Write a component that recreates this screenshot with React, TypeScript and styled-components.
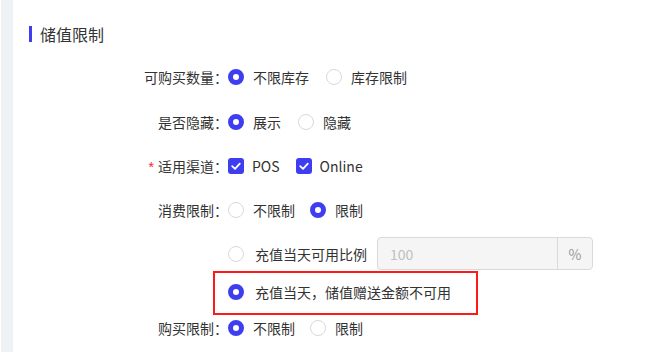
import React from "react";
import styled, { createGlobalStyle } from "styled-components";

const Global = createGlobalStyle`
  html, body { margin: 0; padding: 0; background: #fff; }
  body {
    font-family: "Noto Sans CJK SC", "Noto Sans", sans-serif;
    color: #333;
    font-size: 14px;
  }
`;

const BLUE = "#3e3ef0";

const Page = styled.div`
  display: flex;
  width: 672px;
  height: 352px;
  overflow: hidden;
  background: #fff;
`;

const Side = styled.div`
  width: 12px;
  margin-left: 1px;
  background: #eef2f5;
  flex-shrink: 0;
`;

const Main = styled.div`
  flex: 1;
  display: flex;
  flex-direction: column;
  padding-top: 24px;
`;

const Title = styled.div`
  display: flex;
  align-items: center;
  height: 20px;
  padding-left: 16px;
  font-size: 16px;
  line-height: 20px;
  color: #333;
`;

const TitleBar = styled.span`
  width: 3px;
  height: 16px;
  background: ${BLUE};
  margin-right: 8px;
`;

const Row = styled.div<{ $h: number; $mt: number }>`
  display: flex;
  align-items: center;
  height: ${(p) => p.$h}px;
  margin-top: ${(p) => p.$mt}px;
`;

const Label = styled.div`
  width: 215px;
  flex-shrink: 0;
  text-align: right;
  color: #333;
  line-height: 20px;
  white-space: nowrap;
`;

const Star = styled.span`
  color: #f5222d;
  margin-right: 4px;
  font-family: "Liberation Sans", sans-serif;
`;

const Options = styled.div<{ $gap?: number }>`
  display: flex;
  align-items: center;
  gap: ${(p) => p.$gap ?? 17}px;
`;

const Option = styled.label<{ $gap?: number }>`
  display: flex;
  align-items: center;
  gap: ${(p) => p.$gap ?? 9}px;
  line-height: 20px;
  white-space: nowrap;
  color: #333;
`;

const RadioDot = styled.span<{ $on?: boolean }>`
  width: 16px;
  height: 16px;
  box-sizing: border-box;
  border-radius: 50%;
  background: #fff;
  border: ${(p) => (p.$on ? `5px solid ${BLUE}` : "1px solid #d9d9d9")};
  flex-shrink: 0;
`;

const CheckBox = styled.span`
  width: 16px;
  height: 16px;
  border-radius: 3px;
  background: ${BLUE};
  display: flex;
  align-items: center;
  justify-content: center;
  flex-shrink: 0;
`;

const Sub = styled.div`
  display: flex;
  align-items: center;
  padding-left: 215px;
  height: 33px;
  margin-top: 11px;
`;

const InputGroup = styled.div`
  display: flex;
  width: 216px;
  height: 33px;
  box-sizing: border-box;
  border: 1px solid #d9d9d9;
  border-radius: 4px;
  background: #f5f5f5;
  margin-left: 10px;
`;

const InputText = styled.div`
  flex: 1;
  display: flex;
  align-items: center;
  padding-left: 12px;
  color: #bfbfbf;
`;

const Addon = styled.div`
  width: 34px;
  border-left: 1px solid #d9d9d9;
  display: flex;
  align-items: center;
  justify-content: center;
  color: #999;
`;

const Highlight = styled.div`
  margin-left: 200px;
  margin-top: 1px;
  width: 265px;
  height: 44px;
  box-sizing: border-box;
  border: 2px solid #ff1a1a;
  padding: 9px 0 0 13px;
  display: flex;
  align-items: flex-start;
`;

const Check = () => (
  <svg width="12" height="12" viewBox="0 0 12 12">
    <path d="M2.2 6.2 L5 8.8 L9.8 3.6" fill="none" stroke="#fff" strokeWidth="1.8" strokeLinecap="round" strokeLinejoin="round" />
  </svg>
);

const Radio = ({ on, children, gap }: { on?: boolean; children: React.ReactNode; gap?: number }) => (
  <Option $gap={gap}>
    <RadioDot $on={on} />
    <span>{children}</span>
  </Option>
);

const Checked = ({ children }: { children: React.ReactNode }) => (
  <Option $gap={8}>
    <CheckBox>
      <Check />
    </CheckBox>
    <span>{children}</span>
  </Option>
);

export default function App() {
  return (
    <>
      <Global />
      <Page>
        <Side />
        <Main>
          <Title>
            <TitleBar />
            储值限制
          </Title>
          <Row $h={32} $mt={17}>
            <Label>可购买数量：</Label>
            <Options>
              <Radio on>不限库存</Radio>
              <Radio>库存限制</Radio>
            </Options>
          </Row>
          <Row $h={32} $mt={13}>
            <Label>是否隐藏：</Label>
            <Options>
              <Radio on>展示</Radio>
              <Radio>隐藏</Radio>
            </Options>
          </Row>
          <Row $h={32} $mt={12}>
            <Label>
              <Star>*</Star>适用渠道：
            </Label>
            <Options $gap={16}>
              <Checked>POS</Checked>
              <Checked>Online</Checked>
            </Options>
          </Row>
          <Row $h={32} $mt={12}>
            <Label>消费限制：</Label>
            <Options $gap={15}>
              <Radio>不限制</Radio>
              <Radio on>限制</Radio>
            </Options>
          </Row>
          <Sub>
            <Radio gap={11}>充值当天可用比例</Radio>
            <InputGroup>
              <InputText>100</InputText>
              <Addon>%</Addon>
            </InputGroup>
          </Sub>
          <Highlight>
            <Radio on gap={11}>充值当天，储值赠送金额不可用</Radio>
          </Highlight>
          <Row $h={24} $mt={1}>
            <Label>购买限制：</Label>
            <Options $gap={15}>
              <Radio on>不限制</Radio>
              <Radio>限制</Radio>
            </Options>
          </Row>
        </Main>
      </Page>
    </>
  );
}
